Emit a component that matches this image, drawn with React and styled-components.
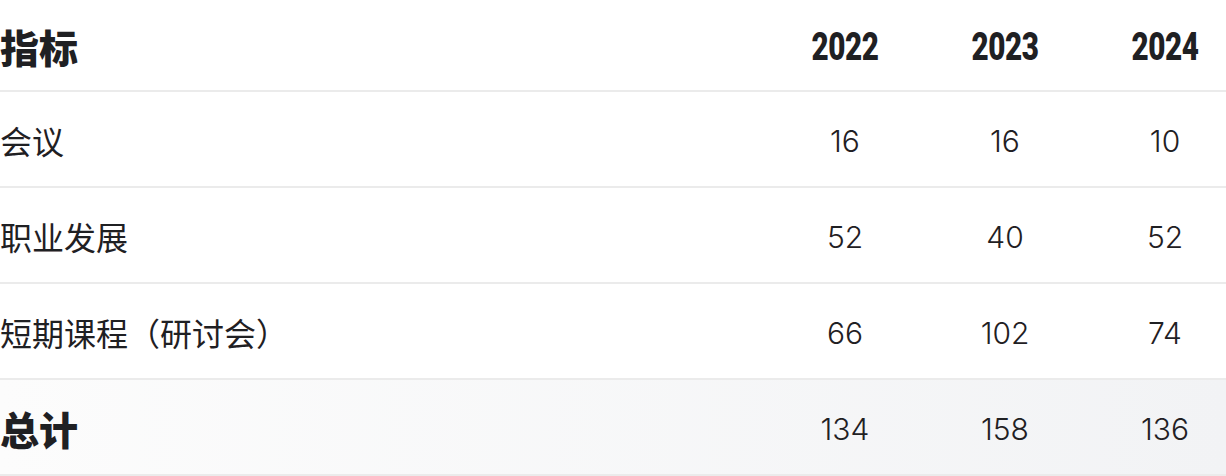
import styled, { createGlobalStyle } from 'styled-components'

const rows = [
  { label: '会议', values: [16, 16, 10] },
  { label: '职业发展', values: [52, 40, 52] },
  { label: '短期课程（研讨会）', values: [66, 102, 74] },
]

const years = [2022, 2023, 2024]
const total = [134, 158, 136]

const App = () => {
  return (
    <>
      <GlobalStyle />
      <Table>
        <HeadRow>
          <HeadLabel>指标</HeadLabel>
          {years.map((y) => (
            <YearCell key={y}>
              <Year>{y}</Year>
            </YearCell>
          ))}
        </HeadRow>
        {rows.map((r) => (
          <Row key={r.label}>
            <Label>{r.label}</Label>
            {r.values.map((v, i) => (
              <Num key={i}>{v}</Num>
            ))}
          </Row>
        ))}
        <Row $total>
          <HeadLabel>总计</HeadLabel>
          {total.map((v, i) => (
            <Num key={i}>{v}</Num>
          ))}
        </Row>
      </Table>
    </>
  )
}

// =================================== styles
const GlobalStyle = createGlobalStyle`
     body {
          margin: 0;
          background: #fff;
          color: #1f2023;
     }
`
const Table = styled.div`
     width: 1226px;
     display: flex;
     flex-direction: column;
`
const HeadRow = styled.div`
     display: grid;
     grid-template-columns: 1fr 160px 160px 160px;
     align-items: center;
     height: 90px;
     border-bottom: 2px solid #ebebeb;
`
const Row = styled(HeadRow)`
     height: 94px;
     background: ${(p) =>
          p.$total ? 'linear-gradient(90deg, #fcfcfc 0%, #f2f3f5 100%)' : 'transparent'};
`
const HeadLabel = styled.div`
     font-family: "Noto Sans CJK SC", sans-serif;
     font-weight: 900;
     font-size: 39px;
     line-height: 1;
     padding-top: 2px;
`
const Label = styled.div`
     font-family: "Noto Sans CJK SC", sans-serif;
     font-size: 32px;
     line-height: 1;
     padding-top: 2px;
`
const YearCell = styled.div`
     padding-left: 38px;
     text-align: center;
     padding-top: 3px;
`
const Year = styled.span`
     display: inline-block;
     transform: scaleX(0.78);
     font-family: Roboto, sans-serif;
     font-weight: 900;
     font-size: 38px;
     line-height: 1;
     letter-spacing: -0.5px;
     color: #1f2023;
`
const Num = styled.div`
     padding-left: 38px;
     padding-top: 4px;
     text-align: center;
     font-family: Inter, "Noto Sans", sans-serif;
     font-weight: 300;
     font-size: 30px;
     line-height: 1;
`

export default App
